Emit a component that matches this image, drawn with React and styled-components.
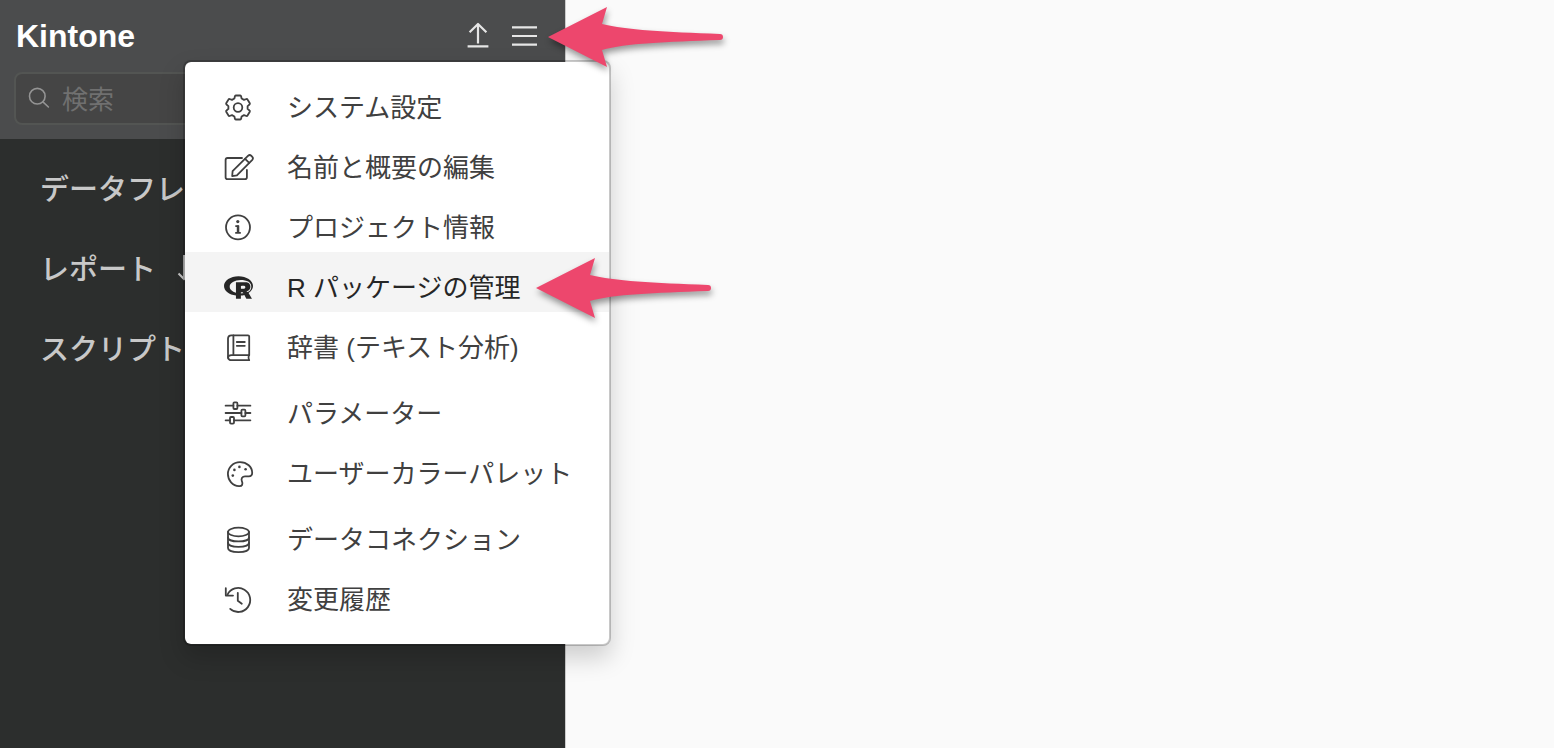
import React from "react";
import styled, { createGlobalStyle, css } from "styled-components";
import { FaRProject } from "react-icons/fa";

const GlobalStyle = createGlobalStyle`
  * {
    box-sizing: border-box;
  }
  body {
    margin: 0;
    background: #fafafa;
    font-family: "Liberation Sans", "Noto Sans CJK JP", sans-serif;
  }
  button, input {
    font-family: inherit;
  }
`;

// layout
const Page = styled.div`
  display: flex;
  min-height: 100vh;
`;
const Sidebar = styled.aside`
  position: relative;
  flex: 0 0 566px;
  background: #2c2e2d;
  border-right: 1px solid #cccccc;
`;
const Content = styled.main`
  flex: 1;
  background: #fafafa;
`;

// header
const Header = styled.header`
  padding: 15px 14px 14px;
  background: #4b4c4d;
`;
const TitleRow = styled.div`
  display: flex;
  align-items: center;
  justify-content: space-between;
  height: 41px;
  margin-bottom: 16px;
  padding: 0 11px 0 2px;
`;
const Title = styled.h1`
  margin: 0;
  font-size: 32px;
  line-height: 40px;
  font-weight: bold;
  color: #ffffff;
`;
const Actions = styled.div`
  display: flex;
  gap: 14px;
`;
const Anchor = styled.div`
  position: relative;
  display: flex;
`;
const IconButton = styled.button`
  display: flex;
  padding: 0;
  border: none;
  background: none;
  color: #e6e6e6;
  cursor: pointer;
`;
const SearchBox = styled.label`
  display: flex;
  align-items: center;
  gap: 10px;
  height: 53px;
  padding: 0 12px;
  border: 2px solid #535553;
  border-radius: 8px;
  background: #454545;
  color: #949494;
`;
const SearchInput = styled.input`
  flex: 1;
  min-width: 0;
  padding: 4px 0 0;
  border: none;
  outline: none;
  background: none;
  font-size: 26px;
  color: #ffffff;
  &::placeholder {
    color: #707070;
  }
`;

// sidebar sections
const SectionList = styled.nav`
  display: flex;
  flex-direction: column;
  padding: 8px 40px;
`;
const SectionLink = styled.a`
  display: flex;
  align-items: center;
  gap: 20px;
  height: 80px;
  font-size: 29px;
  font-weight: 500;
  color: #c8c8c8;
  text-decoration: none;
  white-space: nowrap;
`;

// popup menu
const Menu = styled.div`
  position: absolute;
  top: 60px;
  right: -46px;
  width: 428px;
  display: flex;
  flex-direction: column;
  gap: 6px;
  padding: 10px 0 20px;
  border: 2px solid rgba(0, 0, 0, 0.2);
  border-radius: 8px;
  background: #ffffff;
  background-clip: padding-box;
  box-shadow: 0 12px 24px rgba(0, 0, 0, 0.175);
`;
const MenuGroup = styled.ul`
  margin: 0;
  padding: 0;
  list-style: none;
`;
const MenuRow = styled.li`
  position: relative;
`;
const MenuButton = styled.button`
  display: flex;
  align-items: center;
  gap: 33px;
  width: 100%;
  height: 60px;
  padding: 10px 32px 0 37px;
  border: none;
  background: none;
  font-size: 26px;
  color: #404040;
  white-space: nowrap;
  cursor: pointer;
  &:hover {
    background: #f4f4f4;
  }
  ${props => props.$active && css`
    background: #f4f4f4;
    color: #262626;
  `}
`;
const MenuLabel = styled.span`
  padding-bottom: 4px;
`;
const IconSlot = styled.span`
  display: flex;
  align-items: center;
  justify-content: center;
  width: 32px;
  height: 32px;
`;

const Pointer = styled.svg`
  position: absolute;
  z-index: 2;
  top: ${props => props.$top};
  left: ${props => props.$left};
  overflow: visible;
  pointer-events: none;
  filter: drop-shadow(1px 4px 3px rgba(0, 0, 0, 0.4));
`;

function PointerArrow({ top, left }) {
  return (
    <Pointer $top={top} $left={left} width="176" height="64" viewBox="0 0 176 64" aria-hidden="true">
      <path
        fill="#ed476d"
        d="M0 33 L59 3 L54 20 C78 26 118 28 172 30 A3 3 0 0 1 172 36 C118 38 78 39 54 46 L59 63 Z"
      />
    </Pointer>
  );
}

function LineIcon({ size = 32, weight = 1.8, children }) {
  return (
    <svg
      width={size}
      height={size}
      viewBox={`0 0 ${size} ${size}`}
      fill="none"
      stroke="currentColor"
      strokeWidth={weight}
      strokeLinecap="round"
      strokeLinejoin="round"
      aria-hidden="true"
    >
      {children}
    </svg>
  );
}

const UploadIcon = () => (
  <LineIcon weight={2.2}>
    <path strokeLinecap="butt" d="M16 23.4 V4 M7.6 12.2 L16 4 L24.4 12.2 M5.6 26.4 H26.4" />
  </LineIcon>
);

const MenuIcon = () => (
  <LineIcon weight={2.2}>
    <path strokeLinecap="butt" d="M4 7.4 H29 M4 16 H29 M4 24.6 H29" />
  </LineIcon>
);

const SearchIcon = () => (
  <LineIcon size={24} weight={1.6}>
    <circle cx="9.3" cy="9.2" r="7.8" />
    <path d="M14.9 14.9 L20.4 20" />
  </LineIcon>
);

const GearIcon = () => (
  <LineIcon>
    <g transform="translate(16 16.5)">
      <path d="M-2.2 -12 H2.2 Q3 -12 3.1 -11.2 L3.6 -9 L6 -7.6 L8.4 -8.5 Q9.1 -8.7 9.5 -8 L11.8 -4.2 Q12.2 -3.5 11.5 -3 L9.6 -1.4 V1.4 L11.5 3 Q12.2 3.5 11.8 4.2 L9.5 8 Q9.1 8.7 8.4 8.5 L6 7.6 L3.6 9 L3.1 11.2 Q3 12 2.2 12 H-2.2 Q-3 12 -3.1 11.2 L-3.6 9 L-6 7.6 L-8.4 8.5 Q-9.1 8.7 -9.5 8 L-11.8 4.2 Q-12.2 3.5 -11.5 3 L-9.6 1.4 V-1.4 L-11.5 -3 Q-12.2 -3.5 -11.8 -4.2 L-9.5 -8 Q-9.1 -8.7 -8.4 -8.5 L-6 -7.6 L-3.6 -9 L-3.1 -11.2 Q-3 -12 -2.2 -12 Z" />
      <circle r="4.3" />
    </g>
  </LineIcon>
);

const EditIcon = () => (
  <LineIcon>
    <path d="M20 7 H5.5 Q3.6 7 3.6 8.9 V26.3 Q3.6 28.2 5.5 28.2 H23 Q24.9 28.2 24.9 26.3 V19" />
    <path d="M10.2 25.1 L10.6 20.2 L26.2 4.7 Q27.7 3.4 29.2 4.7 L30.3 5.8 Q31.6 7.3 30.3 8.8 L14.9 24.4 Z" />
    <path d="M23.1 7.8 L27.2 11.9" />
  </LineIcon>
);

const InfoIcon = () => (
  <LineIcon>
    <circle cx="16" cy="16.3" r="12" />
    <circle cx="15.8" cy="10.6" r="1.6" fill="currentColor" stroke="none" />
    <path strokeLinecap="butt" d="M13.3 15.1 H16.2 V21.6 M13.2 21.8 H18.8" />
    <path strokeWidth="2.4" strokeLinecap="butt" d="M16 14.4 V22" />
  </LineIcon>
);

const BookIcon = () => (
  <LineIcon>
    <path d="M27.2 24.2 V5.6 Q27.2 4.4 26 4.4 H9.4 Q6 4.4 6 7.8 V25.4 Q6 29.2 9.8 29.2 H27.2 Q26 27.8 26.8 24.2" />
    <path d="M11.4 4.4 V24 M6 26.8 Q6 24.2 9.6 24.2 H27 M14.8 11 H22.8 M14.8 14.8 H22.8" />
  </LineIcon>
);

const SlidersIcon = () => (
  <LineIcon>
    <path d="M3.6 8.7 H11.4 M15.4 8.7 H28.4 M3.6 16 H19.4 M23.4 16 H28.4 M3.6 23.3 H8 M12 23.3 H28.4" />
    <rect x="11.4" y="5.4" width="4" height="6.6" rx="1" />
    <rect x="19.4" y="12.7" width="4" height="6.6" rx="1" />
    <rect x="8" y="20" width="4" height="6.6" rx="1" />
  </LineIcon>
);

const PaletteIcon = () => (
  <LineIcon>
    <path d="M18 5.1 C25 5.1 30.2 10 30.2 15.8 C30.2 18.3 29 19.3 26.8 19.3 H23 C20.3 19.3 18.9 21.6 19.8 23.9 C21.2 27 20.3 29.3 17 29.1 C10.6 28.8 5.9 23.4 5.9 17.1 C5.9 10.4 11.3 5.1 18 5.1 Z" />
    <g fill="currentColor" stroke="none">
      <circle cx="10.8" cy="18.6" r="1.3" />
      <circle cx="12.4" cy="12.9" r="1.3" />
      <circle cx="17.4" cy="9.9" r="1.3" />
      <circle cx="23.6" cy="12.3" r="1.3" />
    </g>
  </LineIcon>
);

const DatabaseIcon = () => (
  <LineIcon>
    <ellipse cx="16.5" cy="9" rx="10.5" ry="4.3" />
    <path d="M6 9 V25 C6 30.6 27 30.6 27 25 V9" />
    <path d="M6 14.4 C6 19.8 27 19.8 27 14.4 M6 19.7 C6 25.2 27 25.2 27 19.7" />
  </LineIcon>
);

const HistoryIcon = () => (
  <LineIcon>
    <path d="M8.2 25.9 A12 12 0 1 0 5.4 11.8" />
    <path d="M3.8 5.2 V12.6 H11" />
    <path d="M15.8 9.8 V17.8 L19.8 20.8" />
  </LineIcon>
);

const RIcon = () => <FaRProject size={29} aria-hidden="true" />;

const menuGroups = [
  [
    { label: "システム設定", Icon: GearIcon },
    { label: "名前と概要の編集", Icon: EditIcon },
    { label: "プロジェクト情報", Icon: InfoIcon },
    { label: "R パッケージの管理", Icon: RIcon, active: true },
    { label: "辞書 (テキスト分析)", Icon: BookIcon },
  ],
  [
    { label: "パラメーター", Icon: SlidersIcon },
    { label: "ユーザーカラーパレット", Icon: PaletteIcon },
  ],
  [
    { label: "データコネクション", Icon: DatabaseIcon },
    { label: "変更履歴", Icon: HistoryIcon },
  ],
];

function MenuItem({ item }) {
  const { label, Icon, active } = item;
  return (
    <MenuRow>
      <MenuButton type="button" $active={active}>
        <IconSlot><Icon /></IconSlot>
        <MenuLabel>{label}</MenuLabel>
      </MenuButton>
      {active && <PointerArrow top="3px" left="351px" />}
    </MenuRow>
  );
}

function App() {
  return (
    <>
      <GlobalStyle />
      <Page>
        <Sidebar>
          <Header>
            <TitleRow>
              <Title>Kintone</Title>
              <Actions>
                <IconButton type="button" aria-label="アップロード">
                  <UploadIcon />
                </IconButton>
                <Anchor>
                  <IconButton type="button" aria-label="メニュー">
                    <MenuIcon />
                  </IconButton>
                  <PointerArrow top="-16px" left="40px" />
                </Anchor>
              </Actions>
            </TitleRow>
            <SearchBox>
              <SearchIcon />
              <SearchInput type="search" placeholder="検索" aria-label="検索" />
            </SearchBox>
          </Header>
          <SectionList>
            <SectionLink href="#dataframes">データフレーム</SectionLink>
            <SectionLink href="#reports">
              レポート
              <svg width="16" height="28" viewBox="0 0 16 28" fill="none" stroke="currentColor" strokeWidth="2" aria-hidden="true">
                <path d="M8 2 V26 M2.5 20.5 L8 26 L13.5 20.5" />
              </svg>
            </SectionLink>
            <SectionLink href="#scripts">スクリプト</SectionLink>
          </SectionList>
          <Menu>
            {menuGroups.map((items, i) => (
              <MenuGroup key={i}>
                {items.map(item => <MenuItem key={item.label} item={item} />)}
              </MenuGroup>
            ))}
          </Menu>
        </Sidebar>
        <Content />
      </Page>
    </>
  );
}

export default App;
